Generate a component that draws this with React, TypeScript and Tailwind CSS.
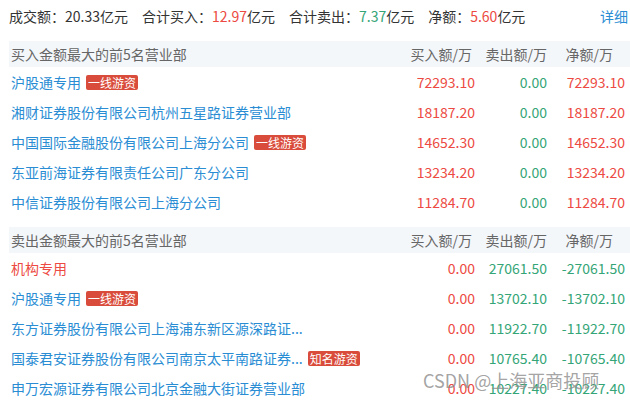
import React from 'react';

type Row = { name: string; tag?: string; buy: string; sell: string; net: string; nameColor?: string };

const buyRows: Row[] = [
    { name: '沪股通专用', tag: '一线游资', buy: '72293.10', sell: '0.00', net: '72293.10' },
    { name: '湘财证券股份有限公司杭州五星路证券营业部', buy: '18187.20', sell: '0.00', net: '18187.20' },
    { name: '中国国际金融股份有限公司上海分公司', tag: '一线游资', buy: '14652.30', sell: '0.00', net: '14652.30' },
    { name: '东亚前海证券有限责任公司广东分公司', buy: '13234.20', sell: '0.00', net: '13234.20' },
    { name: '中信证券股份有限公司上海分公司', buy: '11284.70', sell: '0.00', net: '11284.70' },
];

const sellRows: Row[] = [
    { name: '机构专用', nameColor: 'text-[#ec4a42]', buy: '0.00', sell: '27061.50', net: '-27061.50' },
    { name: '沪股通专用', tag: '一线游资', buy: '0.00', sell: '13702.10', net: '-13702.10' },
    { name: '东方证券股份有限公司上海浦东新区源深路证...', buy: '0.00', sell: '11922.70', net: '-11922.70' },
    { name: '国泰君安证券股份有限公司南京太平南路证券...', tag: '知名游资', buy: '0.00', sell: '10765.40', net: '-10765.40' },
    { name: '申万宏源证券有限公司北京金融大街证券营业部', buy: '0.00', sell: '10227.40', net: '-10227.40' },
];

const RED = 'text-[#ec4a42]';
const GREEN = 'text-[#34a577]';

function Header({ title }: { title: string }) {
    return (
        <div className="flex items-center h-[26px] bg-[#f4f7fa] text-[#666] text-[14px]">
            <div className="flex-1 pl-[2px]">{title}</div>
            <div className="w-[80px] text-right pr-[3px]">买入额/万</div>
            <div className="w-[75px] text-right pr-[3px]">卖出额/万</div>
            <div className="w-[80px] text-right pr-[17px]">净额/万</div>
        </div>
    );
}

function DataRow({ row }: { row: Row }) {
    const isSell = row.net.startsWith('-');
    return (
        <div className="flex items-center h-[30px] text-[14px]">
            <div className="flex-1 flex items-center pl-[2px] min-w-0">
                <span className={`whitespace-nowrap ${row.nameColor ?? 'text-[#2a8dd4]'}`}>{row.name}</span>
                {row.tag && (
                    <span className="ml-[5px] h-[15px] leading-[15px] px-[2px] text-[12px] text-white bg-[#d94b3a] rounded-[2px] whitespace-nowrap">
                        {row.tag}
                    </span>
                )}
            </div>
            <div className={`w-[80px] text-right ${RED}`}>{row.buy}</div>
            <div className={`w-[75px] text-right pr-[3px] ${GREEN}`}>{row.sell}</div>
            <div className={`w-[80px] text-right pr-[5px] ${isSell ? GREEN : RED}`}>{row.net}</div>
        </div>
    );
}

export default function App() {
    return (
        <div className="relative w-[630px] h-[400px] overflow-hidden bg-white pl-[9px] font-['Noto_Sans_CJK_SC',sans-serif]">
            <div className="flex items-center h-[32px] text-[14px] text-[#333] pr-[2px]">
                <span>成交额：20.33亿元</span>
                <span className="ml-[14px]">合计买入：<span className={RED}>12.97</span>亿元</span>
                <span className="ml-[14px]">合计卖出：<span className={GREEN}>7.37</span>亿元</span>
                <span className="ml-[14px]">净额：<span className={RED}>5.60</span>亿元</span>
                <span className="ml-auto text-[#2a8dd4]">详细</span>
            </div>

            <div className="mt-[9px]">
                <Header title="买入金额最大的前5名营业部" />
                {buyRows.map(r => <DataRow key={r.name} row={r} />)}
            </div>

            <div className="mt-[10px]">
                <Header title="卖出金额最大的前5名营业部" />
                {sellRows.map(r => <DataRow key={r.name + r.sell} row={r} />)}
            </div>

            <div className="absolute left-[423px] top-[368px] text-[18px] leading-[24px] text-[#8c8c8c]/80 whitespace-nowrap">
                CSDN @上海亚商投顾
            </div>
        </div>
    );
}
